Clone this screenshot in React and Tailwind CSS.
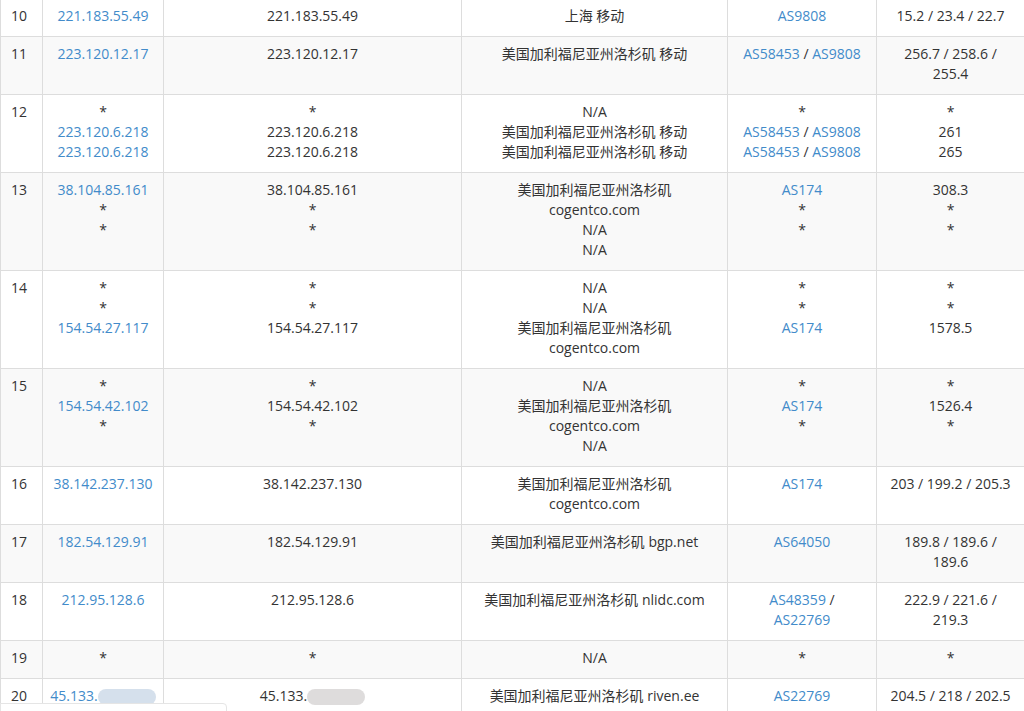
const L = (t) => ({ t, link: true });

const rows = [
  { n: 10, ip: [L('221.183.55.49')], host: ['221.183.55.49'], loc: ['上海 移动'], as: [[L('AS9808')]], rtt: ['15.2 / 23.4 / 22.7'] },
  { n: 11, ip: [L('223.120.12.17')], host: ['223.120.12.17'], loc: ['美国加利福尼亚州洛杉矶 移动'], as: [[L('AS58453'), ' / ', L('AS9808')]], rtt: ['256.7 / 258.6 / 255.4'] },
  { n: 12, ip: ['*', L('223.120.6.218'), L('223.120.6.218')], host: ['*', '223.120.6.218', '223.120.6.218'], loc: ['N/A', '美国加利福尼亚州洛杉矶 移动', '美国加利福尼亚州洛杉矶 移动'], as: [['*'], [L('AS58453'), ' / ', L('AS9808')], [L('AS58453'), ' / ', L('AS9808')]], rtt: ['*', '261', '265'] },
  { n: 13, ip: [L('38.104.85.161'), '*', '*'], host: ['38.104.85.161', '*', '*'], loc: ['美国加利福尼亚州洛杉矶', 'cogentco.com', 'N/A', 'N/A'], as: [[L('AS174')], ['*'], ['*']], rtt: ['308.3', '*', '*'] },
  { n: 14, ip: ['*', '*', L('154.54.27.117')], host: ['*', '*', '154.54.27.117'], loc: ['N/A', 'N/A', '美国加利福尼亚州洛杉矶', 'cogentco.com'], as: [['*'], ['*'], [L('AS174')]], rtt: ['*', '*', '1578.5'] },
  { n: 15, ip: ['*', L('154.54.42.102'), '*'], host: ['*', '154.54.42.102', '*'], loc: ['N/A', '美国加利福尼亚州洛杉矶', 'cogentco.com', 'N/A'], as: [['*'], [L('AS174')], ['*']], rtt: ['*', '1526.4', '*'] },
  { n: 16, ip: [L('38.142.237.130')], host: ['38.142.237.130'], loc: ['美国加利福尼亚州洛杉矶', 'cogentco.com'], as: [[L('AS174')]], rtt: ['203 / 199.2 / 205.3'] },
  { n: 17, ip: [L('182.54.129.91')], host: ['182.54.129.91'], loc: ['美国加利福尼亚州洛杉矶 bgp.net'], as: [[L('AS64050')]], rtt: ['189.8 / 189.6 / 189.6'] },
  { n: 18, ip: [L('212.95.128.6')], host: ['212.95.128.6'], loc: ['美国加利福尼亚州洛杉矶 nlidc.com'], as: [[L('AS48359'), ' / ', L('AS22769')]], rtt: ['222.9 / 221.6 / 219.3'] },
  { n: 19, ip: ['*'], host: ['*'], loc: ['N/A'], as: [['*']], rtt: ['*'] },
  { n: 20, ip: ['blur-link'], host: ['blur'], loc: ['美国加利福尼亚州洛杉矶 riven.ee'], as: [[L('AS22769')]], rtt: ['204.5 / 218 / 202.5'] },
];

function Piece({ p }) {
  if (p === 'blur-link' || p === 'blur') {
    const link = p === 'blur-link';
    return (
      <span className={link ? 'text-[#428bca]' : ''}>
        45.133.
        <span className={`inline-block h-[16px] w-[58px] rounded-full align-middle ${link ? 'bg-[#d5e0ec]' : 'bg-[#dedcdc]'}`} />
      </span>
    );
  }
  if (typeof p === 'string') return <span>{p}</span>;
  return <span className="text-[#428bca]">{p.t}</span>;
}

function Lines({ items }) {
  return items.map((it, i) => (
    <div key={i}>
      {Array.isArray(it) ? it.map((p, j) => <Piece key={j} p={p} />) : <Piece p={it} />}
    </div>
  ));
}

const cell = 'border border-[#ddd] pt-[7px] pb-[10px] text-center align-top';

export default function App() {
  return (
    <div className="relative h-[711px] w-[1024px] overflow-hidden bg-white text-[14px] leading-[20px] text-[#333]" style={{ fontFamily: '"Open Sans", "Noto Sans CJK SC", sans-serif' }}>
      <table className="-mt-[2px] w-[1024px] table-fixed border-collapse">
        <colgroup>
          <col className="w-[42px]" />
          <col className="w-[121px]" />
          <col className="w-[298px]" />
          <col className="w-[266px]" />
          <col className="w-[149px]" />
          <col className="w-[148px]" />
        </colgroup>
        <tbody>
          {rows.map((r) => (
            <tr key={r.n} className={r.n % 2 ? 'bg-[#f9f9f9]' : 'bg-white'}>
              <td className="border border-[#ddd] px-[10px] pt-[7px] pb-[10px] align-top">{r.n}</td>
              <td className={`${cell} px-1`}><Lines items={r.ip} /></td>
              <td className={`${cell} px-1`}><Lines items={r.host} /></td>
              <td className={`${cell} px-1`}><Lines items={r.loc} /></td>
              <td className={`${cell} px-[12px]`}><Lines items={r.as} /></td>
              <td className={`${cell} px-[8px]`}><Lines items={r.rtt} /></td>
            </tr>
          ))}
        </tbody>
      </table>
      <div className="absolute left-0 top-[703px] h-[20px] w-[227px] rounded-tr border border-[#e5e5e5] bg-white" />
    </div>
  );
}
